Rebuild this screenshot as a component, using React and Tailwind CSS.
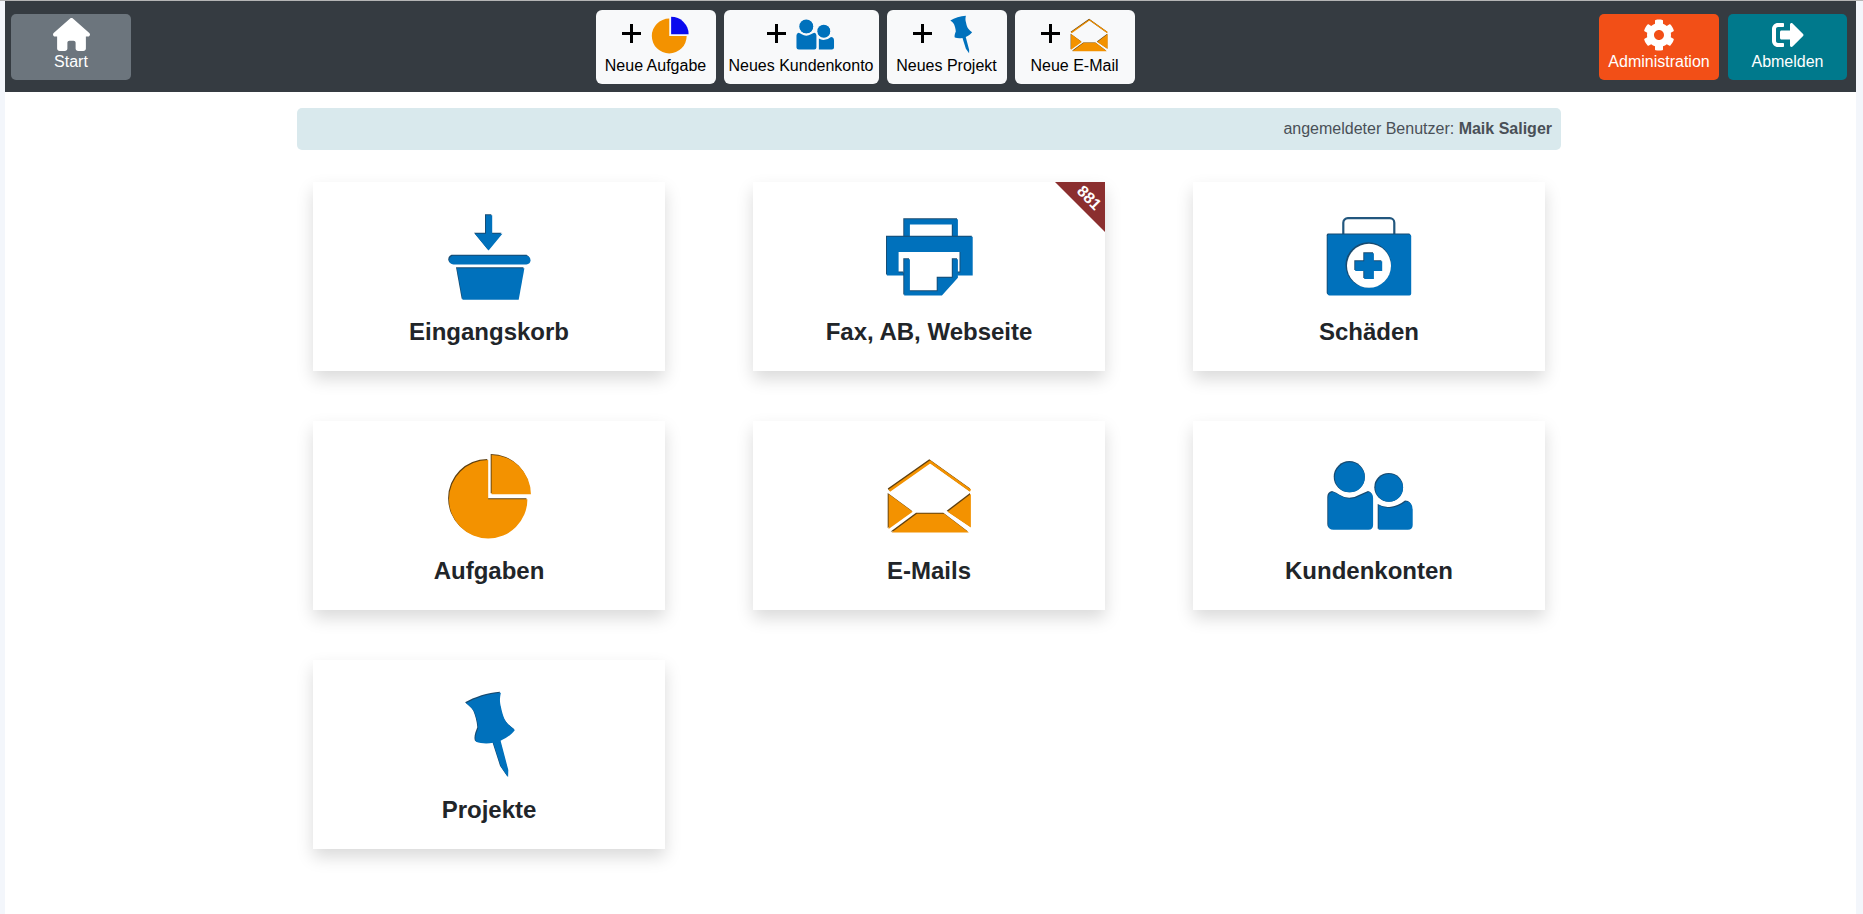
import React from "react";
import { FaCog, FaSignOutAlt } from "react-icons/fa";
import { FaHouse } from "react-icons/fa6";

const BLUE = "#0071bc";
const BLUE_DK = "#174a70";
const ORANGE = "#f39200";
const ORANGE_DK = "#5f4010";

function Shape({ d, c, dk }) {
  return (
    <>
      {dk && <path d={d} fill={dk} fillRule="evenodd" />}
      <path d={d} fill={c} fillRule="evenodd" transform={dk ? "translate(.9 1)" : undefined} />
    </>
  );
}

function Svg({ size, children }) {
  return (
    <svg width={size} height={size} viewBox="0 0 90 90" className="block shrink-0">
      {children}
    </svg>
  );
}

function BasketIcon({ size = 90 }) {
  return (
    <Svg size={size}>
      <Shape c={BLUE} dk={BLUE_DK} d="M41 2.3H47.3V20.7H57.5L43.7 37.6 30 20.7H41Z" />
      <Shape c={BLUE} dk={BLUE_DK} d="M8.5 42.7H81.5C84 42.7 85.6 45 85.6 47.2 85.6 49.5 84 51.4 81.5 51.4H8.5C6 51.4 4.3 49.5 4.3 47.2 4.3 45 6 42.7 8.5 42.7Z" />
      <Shape c={BLUE} dk={BLUE_DK} d="M12 55.3H79.5L73.8 86.8H17.7Z" />
    </Svg>
  );
}

function PrinterIcon({ size = 90 }) {
  return (
    <Svg size={size}>
      <Shape c={BLUE} dk={BLUE_DK} d="M19.3 6.3H73V24H67.8V11.5H25V24H19.3Z" />
      <Shape c={BLUE} dk={BLUE_DK} d="M2 23.7H87.8V62.5H73V59.5H75.5V39H13.7V59.5H19.3V62.5H2Z" />
      <Shape c={BLUE} dk={BLUE_DK} d="M19.3 46.3H25V78.2H52.7V64.7H67.8V46.3H73V64.7L57 82.5H19.3Z" />
    </Svg>
  );
}

function CaseIcon({ size = 90 }) {
  return (
    <Svg size={size}>
      <rect x="19.3" y="6.2" width="51" height="22" rx="4.5" fill="none" stroke="#22577e" strokeWidth="2.2" />
      <Shape c={BLUE} dk={BLUE_DK} d="M4.5 21.6H84.6C85.6 21.6 86.3 22.3 86.3 23.3V80.5C86.3 81.7 85.6 82.5 84.6 82.5H4.5C3.4 82.5 2.7 81.7 2.7 80.5V23.3C2.7 22.3 3.4 21.6 4.5 21.6Z" />
      <circle cx="44.3" cy="53" r="22.8" fill={BLUE_DK} />
      <circle cx="45" cy="53.8" r="22" fill="#ffffff" />
      <Shape c={BLUE} dk={BLUE_DK} d="M39.3 40.3H49V48.3H57.3V58H49V66H39.3V58H30.3V48.3H39.3Z" />
    </Svg>
  );
}

function PieIcon({ size = 90, wedge = ORANGE, outline = true }) {
  const dk = outline ? ORANGE_DK : undefined;
  return (
    <Svg size={size}>
      <Shape c={ORANGE} dk={dk} d="M43.3 47.3H82.5A39.2 39.2 0 1 1 43.3 8.1Z" />
      <Shape c={wedge} dk={outline ? ORANGE_DK : "#ffffff"} d="M46.7 42.3V3A39.3 39.3 0 0 1 86 42.3Z" />
    </Svg>
  );
}

function MailIcon({ size = 90, outline = true }) {
  const dk = outline ? ORANGE_DK : undefined;
  return (
    <Svg size={size}>
      <Shape c={ORANGE} dk={dk} d="M3.7 37.5L45.3 8.3 86.2 37.5 85 39.8 45.3 11.6 5.2 39.8Z" />
      <Shape c={ORANGE} dk={dk} d="M3.7 42L27.8 59.7 3.7 77Z" />
      <Shape c={ORANGE} dk={dk} d="M86 42L62.7 59.7 86 75.5Z" />
      <Shape c={ORANGE} dk={dk} d="M6.7 80.5L32 61.7H59.3L84 80.5Z" />
    </Svg>
  );
}

function PeopleIcon({ size = 90, outline = true }) {
  const dk = outline ? BLUE_DK : undefined;
  return (
    <Svg size={size}>
      <circle cx="25.3" cy="25.7" r="15.6" fill={dk || BLUE} />
      <circle cx="25.8" cy="26.3" r="15" fill={BLUE} />
      <circle cx="64.7" cy="36.3" r="14.4" fill={dk || BLUE} />
      <circle cx="65.2" cy="36.9" r="13.8" fill={BLUE} />
      <Shape c={BLUE} dk={dk} d="M8 40Q13 41.5 15 43.5 25 50 36 43.5 41 41 44 40 48.2 41 48.2 46V73Q48.2 77.8 43.5 77.8H8.5Q3.3 77.8 3.3 73V46Q3.3 41 8 40Z" />
      <Shape c={BLUE} dk={dk} d="M53.7 53Q60 57 67 55.7 74 55 81 49.5 87.8 49.5 87.8 58V73Q87.8 77.8 83 77.8H53.7Z" />
    </Svg>
  );
}

function PinIcon({ size = 90, outline = true }) {
  return (
    <Svg size={size}>
      <Shape
        c={BLUE}
        dk={outline ? BLUE_DK : undefined}
        d="M21 12.3C30 7 44 2.5 56 1.7 54.5 8 55 12 56 15.7 57.5 23 59 28 62 31.7 64 34.5 67 36.5 70 39 66 44 62 47 55.7 49.7L63.4 79 63.2 86.3 56 75.7 48.3 51.7C42 53 36 52.5 31 50.7 29.5 47 31.5 42 33.3 37.3 33 31 31 25 29.3 20.7 27 17 24 14.5 21 12.3Z"
      />
    </Svg>
  );
}

function Plus() {
  return (
    <svg width="19" height="19" viewBox="0 0 19 19" className="block shrink-0 -mt-[3px]">
      <path d="M9.5 0V19M0 9.5H19" stroke="#000" strokeWidth="3" />
    </svg>
  );
}

function QuickButton({ label, icon }) {
  return (
    <button className="flex h-[74px] min-w-[120px] flex-col items-center rounded-[6px] bg-[#f8f9fa] px-[5px] pt-[5px] text-[16px] leading-[20px] text-black">
      <span className="flex h-[40px] items-center gap-[9px]">
        <Plus />
        {icon}
      </span>
      <span className="mt-[1px] whitespace-nowrap">{label}</span>
    </button>
  );
}

function NavButton({ label, icon, cls }) {
  return (
    <button className={`flex h-[66px] flex-col items-center rounded-[5px] pt-[5px] text-[16px] leading-[20px] text-white ${cls}`}>
      <span className="flex h-[32px] items-center justify-center">{icon}</span>
      <span className="mt-[1px]">{label}</span>
    </button>
  );
}

function Card({ title, icon, badge }) {
  return (
    <div className="relative flex flex-col items-center bg-white pb-[21px] pt-[30px] shadow-[0_8px_16px_rgba(0,0,0,0.15)]">
      {badge && (
        <div className="absolute right-0 top-0 h-[50px] w-[50px]">
          <div className="h-0 w-0 border-l-[50px] border-t-[50px] border-l-transparent border-t-[#8b2f2f]" />
          <span className="absolute right-[1px] top-[6px] w-[30px] rotate-45 text-center text-[16px] font-bold leading-[20px] text-white">
            {badge}
          </span>
        </div>
      )}
      {icon}
      <div className="mt-[12px] text-[24px] font-bold leading-[36px] text-[#212529]">{title}</div>
    </div>
  );
}

export default function App() {
  return (
    <div className="flex h-screen flex-col overflow-hidden border-t border-[#b5b5b5] bg-[#f3f6fb] pl-[5px] pr-[7px] font-['Liberation_Sans',Arial,sans-serif]">
      <nav className="flex h-[91px] shrink-0 items-center justify-between bg-[#353b41] pl-[6px] pr-[9px]">
        <NavButton label="Start" cls="w-[120px] bg-[#6c757d]" icon={<FaHouse size={37} />} />
        <div className="flex gap-[8px]">
          <QuickButton label="Neue Aufgabe" icon={<PieIcon size={40} wedge="#0a0aee" outline={false} />} />
          <QuickButton label="Neues Kundenkonto" icon={<PeopleIcon size={40} outline={false} />} />
          <QuickButton label="Neues Projekt" icon={<PinIcon size={40} outline={false} />} />
          <QuickButton label="Neue E-Mail" icon={<MailIcon size={40} />} />
        </div>
        <div className="flex gap-[9px]">
          <NavButton label="Administration" cls="w-[120px] bg-[#f24f17]" icon={<FaCog size={32} />} />
          <NavButton label="Abmelden" cls="w-[119px] bg-[#00798c]" icon={<FaSignOutAlt size={32} />} />
        </div>
      </nav>
      <main className="flex flex-1 flex-col items-center bg-white pr-[3px] pt-[16px]">
        <div className="h-[42px] w-[1264px] rounded-[5px] bg-[#d9e9ed] pr-[9px] text-right text-[16px] leading-[42px] text-[#495057]">
          angemeldeter Benutzer: <b>Maik Saliger</b>
        </div>
        <div className="mt-[32px] grid w-[1232px] grid-cols-3 gap-x-[88px] gap-y-[50px]">
          <Card title="Eingangskorb" icon={<BasketIcon />} />
          <Card title="Fax, AB, Webseite" icon={<PrinterIcon />} badge="881" />
          <Card title="Schäden" icon={<CaseIcon />} />
          <Card title="Aufgaben" icon={<PieIcon />} />
          <Card title="E-Mails" icon={<MailIcon />} />
          <Card title="Kundenkonten" icon={<PeopleIcon />} />
          <Card title="Projekte" icon={<PinIcon />} />
        </div>
      </main>
    </div>
  );
}
